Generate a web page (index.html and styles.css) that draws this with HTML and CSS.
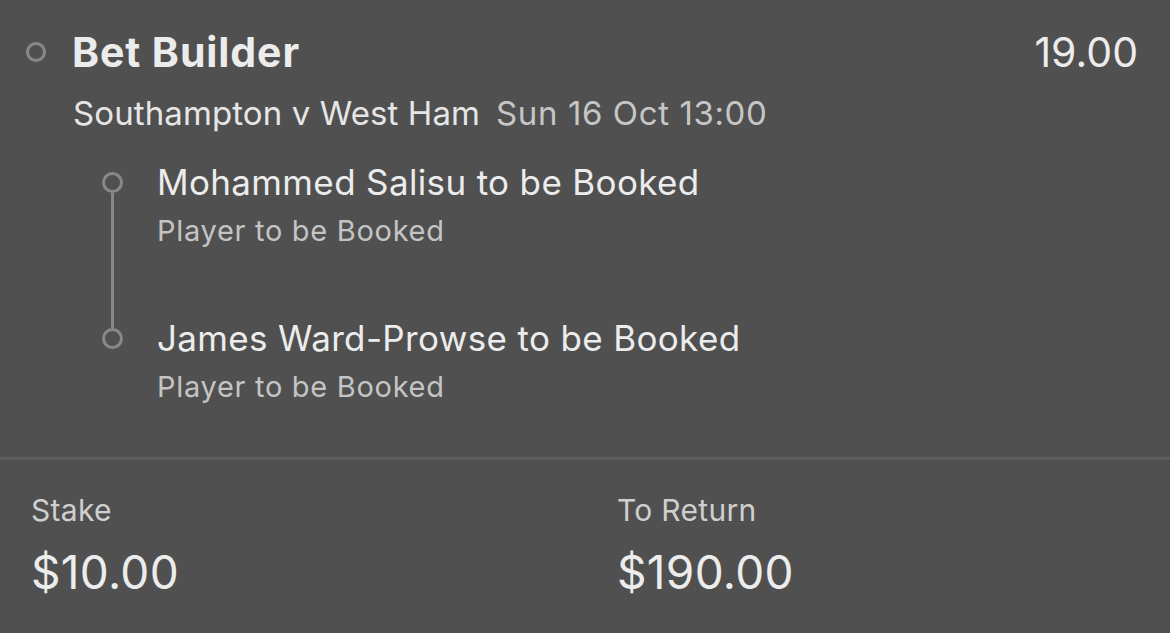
FILE: index.html
```html
<!DOCTYPE html>
<html>
<head>
<meta charset="utf-8">
<link rel="stylesheet" href="styles.css">
</head>
<body>
<div class="slip">
  <div class="top">
    <div class="head">
      <span class="dot"></span>
      <span class="title">Bet Builder</span>
      <span class="odds">19.00</span>
    </div>
    <div class="event">
      <span class="match">Southampton v West Ham</span>
      <span class="date">Sun 16 Oct 13:00</span>
    </div>
    <div class="legs">
      <div class="leg first">
        <span class="ldot"></span>
        <div class="ltext">
          <div class="sel">Mohammed Salisu to be Booked</div>
          <div class="mkt">Player to be Booked</div>
        </div>
      </div>
      <div class="leg last">
        <span class="ldot"></span>
        <div class="ltext">
          <div class="sel">James Ward-Prowse to be Booked</div>
          <div class="mkt">Player to be Booked</div>
        </div>
      </div>
    </div>
  </div>
  <div class="bottom">
    <div class="col">
      <div class="lbl">Stake</div>
      <div class="amt">$10.00</div>
    </div>
    <div class="col">
      <div class="lbl">To Return</div>
      <div class="amt">$190.00</div>
    </div>
  </div>
</div>
</body>
</html>
```
FILE: styles.css
```css
html, body {
  margin: 0;
  padding: 0;
  background: #505050;
}
body {
  width: 1170px;
  height: 633px;
  overflow: hidden;
  font-family: Inter, "Liberation Sans", sans-serif;
  color: #ececec;
}
.slip {
  display: flex;
  flex-direction: column;
}
.top {
  padding: 26px 32px 0 24px;
  height: 460px;
  box-sizing: border-box;
  border-bottom: 3px solid #5d5d5d;
}
.head {
  display: flex;
  align-items: center;
  height: 52px;
}
.dot {
  width: 20px;
  height: 20px;
  border: 3px solid #888888;
  border-radius: 50%;
  box-sizing: border-box;
  margin-left: 2px;
  margin-right: 26px;
  flex: none;
}
.title {
  font-size: 41px;
  line-height: 52px;
  font-weight: 700;
  letter-spacing: 0.9px;
}
.odds {
  margin-left: auto;
  font-size: 41px;
  line-height: 52px;
  font-weight: 400;
}
.event {
  margin-left: 49px;
  margin-top: 15px;
  display: flex;
  align-items: baseline;
  gap: 16px;
  line-height: 40px;
}
.match {
  font-size: 33px;
  letter-spacing: 0.1px;
  color: #e6e6e6;
}
.date {
  font-size: 33px;
  letter-spacing: 0.6px;
  color: #c6c6c6;
}
.legs {
  margin-left: 78px;
  margin-top: 29px;
}
.leg {
  display: flex;
  position: relative;
}
.leg.first {
  height: 156px;
}
.ldot {
  width: 21px;
  height: 21px;
  border: 3px solid #888888;
  border-radius: 50%;
  box-sizing: border-box;
  margin-top: 10px;
  margin-right: 34px;
  flex: none;
}
.leg.first::after {
  content: "";
  position: absolute;
  left: 9px;
  top: 31px;
  width: 3px;
  height: 135px;
  background: #888888;
}
.sel {
  font-size: 35px;
  line-height: 40px;
  letter-spacing: 0.35px;
  color: #ececec;
}
.mkt {
  font-size: 29px;
  line-height: 36px;
  letter-spacing: 0.7px;
  margin-top: 11px;
  color: #c4c4c4;
}
.bottom {
  display: grid;
  grid-template-columns: 586px 1fr;
  padding: 32px 0 0 31px;
}
.lbl {
  font-size: 30px;
  line-height: 36px;
  letter-spacing: 0.3px;
  color: #cfcfcf;
}
.amt {
  font-size: 46px;
  line-height: 54px;
  margin-top: 17px;
  letter-spacing: 0.3px;
  color: #ececec;
}
```
